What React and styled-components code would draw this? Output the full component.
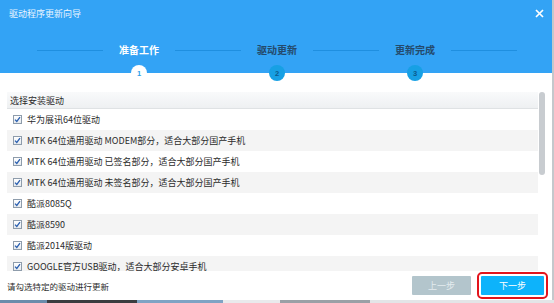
import React from "react";
import styled, { createGlobalStyle } from "styled-components";

const Global = createGlobalStyle`
  html, body { margin: 0; padding: 0; }
  body {
    width: 554px; height: 303px; overflow: hidden;
    background: #cfd2d5;
    font-family: "Noto Sans CJK SC", "Noto Sans", sans-serif;
  }
`;

const Page = styled.div`
  width: 554px;
  height: 303px;
  display: flex;
  flex-direction: column;
`;

const Dialog = styled.div`
  width: 552px;
  height: 300px;
  background: #fff;
  display: flex;
  flex-direction: column;
  border-right: 2px solid #c4c8cc;
`;

const BottomStrip = styled.div`
  height: 3px;
  background: linear-gradient(90deg, #6b8cab 0 47px, #3b3d40 47px 137px, #7fa3c4 137px 223px, #e9eaec 223px 280px, #9aa0a6 280px 370px, #e3e5e7 370px);
`;

const Header = styled.div`
  height: 73px;
  background: #33a3f5;
  display: flex;
  flex-direction: column;
  flex-shrink: 0;
  position: relative;
  z-index: 1;
`;

const TitleBar = styled.div`
  height: 26px;
  display: flex;
  align-items: center;
  justify-content: space-between;
  padding: 0 8px 0 9px;
`;

const Title = styled.div`
  color: #eaf5ff;
  font-size: 9px;
  letter-spacing: 0px;
`;

const CloseBtn = styled.div`
  width: 9px;
  height: 9px;
  display: flex;
  margin-right: 0;
`;

const Stepper = styled.div`
  flex: 1;
  display: flex;
  align-items: flex-end;
  padding-left: 37px;
  gap: 15px;
`;

const Line = styled.div`
  width: 66px;
  height: 1px;
  background: #1f8fe0;
  align-self: flex-start;
  margin-top: 24px;
`;

const Step = styled.div`
  width: 42px;
  display: flex;
  flex-direction: column;
  align-items: center;
  margin-bottom: -8px;
`;

const StepLabel = styled.div`
  font-size: 10px;
  font-weight: 700;
  color: ${(p) => (p.$active ? "#ffffff" : "#244a6c")};
  white-space: nowrap;
  line-height: 14px;
  margin-bottom: 8px;
`;

const StepCircle = styled.div`
  width: 16px;
  height: 16px;
  border-radius: 50%;
  background: ${(p) => (p.$active ? "#ffffff" : "#17a0e4")};
  color: ${(p) => (p.$active ? "#2f9fe9" : "#0c5a8c")};
  font-size: 7.5px;
  font-weight: 700;
  font-family: "Liberation Sans", Arial, sans-serif;
  display: flex;
  align-items: center;
  justify-content: center;
  margin-left: ${(p) => p.$shift || 0}px;
`;

const Body = styled.div`
  flex: 1;
  display: flex;
  padding: 19px 6px 0 7px;
  min-height: 0;
`;

const ListBox = styled.div`
  width: 532px;
  height: 179px;
  overflow: hidden;
  display: flex;
  flex-direction: column;
`;

const ListHead = styled.div`
  height: 17px;
  flex-shrink: 0;
  display: flex;
  align-items: center;
  padding-left: 3px;
  font-size: 9px;
  color: #2b2b2b;
  background: linear-gradient(#f9fafb, #eef0f2);
  border-bottom: 1px solid #dfe2e4;
  box-sizing: border-box;
`;

const Row = styled.div`
  height: 21px;
  flex-shrink: 0;
  display: flex;
  align-items: center;
  gap: 5px;
  padding-left: 6px;
  font-size: 9px;
  color: #2b2b2b;
  background: ${(p) => (p.$alt ? "#f4f4f4" : "#ffffff")};
  white-space: nowrap;
`;

const Check = styled.div`
  width: 9px;
  height: 9px;
  box-sizing: border-box;
  border: 1px solid #8e9cab;
  background: linear-gradient(#ffffff, #e6eaee);
  display: flex;
  align-items: center;
  justify-content: center;
  flex-shrink: 0;
`;

const ScrollTrack = styled.div`
  width: 7px;
  margin-left: 1px;
  display: flex;
  flex-direction: column;
`;

const Thumb = styled.div`
  width: 6px;
  height: 83px;
  border-radius: 3px;
  background: #c8ccd0;
`;

const Footer = styled.div`
  height: 29px;
  flex-shrink: 0;
  display: flex;
  align-items: center;
  padding: 0 8px 0 7px;
  gap: 10px;
`;

const Hint = styled.div`
  flex: 1;
  font-size: 8.5px;
  color: #2b2b2b;
`;

const Button = styled.div`
  width: ${(p) => p.$w}px;
  height: 19px;
  display: flex;
  align-items: center;
  justify-content: center;
  font-size: 9px;
  color: ${(p) => (p.$primary ? "#ffffff" : "#e4ecef")};
  background: ${(p) => (p.$primary ? "#0db3fb" : "#b3c5cc")};
  border-radius: 1px;
  ${(p) => p.$focus && "outline: 2px solid #e3141c; outline-offset: 2px;"}
`;

const rows = [
  "华为展讯64位驱动",
  "MTK 64位通用驱动 MODEM部分，适合大部分国产手机",
  "MTK 64位通用驱动 已签名部分，适合大部分国产手机",
  "MTK 64位通用驱动 未签名部分，适合大部分国产手机",
  "酷派8085Q",
  "酷派8590",
  "酷派2014版驱动",
  "GOOGLE官方USB驱动，适合大部分安卓手机",
];

const CheckMark = () => (
  <svg width="7" height="7" viewBox="0 0 7 7">
    <path d="M1 3.6 L2.8 5.4 L6 1.2" fill="none" stroke="#2a5fb0" strokeWidth="1.3" />
  </svg>
);

export default function App() {
  return (
    <>
      <Global />
      <Page>
        <Dialog>
          <Header>
            <TitleBar>
              <Title>驱动程序更新向导</Title>
              <CloseBtn>
                <svg width="9" height="9" viewBox="0 0 9 9">
                  <path d="M1 1 L8 8 M8 1 L1 8" stroke="#fff" strokeWidth="1.7" />
                </svg>
              </CloseBtn>
            </TitleBar>
            <Stepper>
              <Line />
              <Step>
                <StepLabel $active>准备工作</StepLabel>
                <StepCircle $active>1</StepCircle>
              </Step>
              <Line />
              <Step>
                <StepLabel>驱动更新</StepLabel>
                <StepCircle>2</StepCircle>
              </Step>
              <Line />
              <Step>
                <StepLabel>更新完成</StepLabel>
                <StepCircle>3</StepCircle>
              </Step>
              <Line />
            </Stepper>
          </Header>
          <Body>
            <ListBox>
              <ListHead>选择安装驱动</ListHead>
              {rows.map((r, i) => (
                <Row key={i} $alt={i % 2 === 1}>
                  <Check>
                    <CheckMark />
                  </Check>
                  {r}
                </Row>
              ))}
            </ListBox>
            <ScrollTrack>
              <Thumb />
            </ScrollTrack>
          </Body>
          <Footer>
            <Hint>请勾选特定的驱动进行更新</Hint>
            <Button $w={59}>上一步</Button>
            <Button $w={63} $primary $focus>下一步</Button>
          </Footer>
        </Dialog>
        <BottomStrip />
      </Page>
    </>
  );
}
